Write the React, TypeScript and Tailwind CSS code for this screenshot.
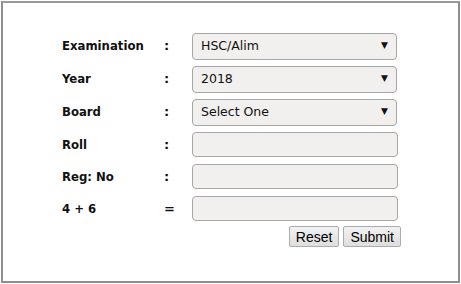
import React from 'react';

const rows = [
  { label: 'Examination', sep: ':', kind: 'select', value: 'HSC/Alim' },
  { label: 'Year', sep: ':', kind: 'select', value: '2018' },
  { label: 'Board', sep: ':', kind: 'select', value: 'Select One' },
  { label: 'Roll', sep: ':', kind: 'input' },
  { label: 'Reg: No', sep: ':', kind: 'input' },
  { label: '4 + 6', sep: '=', kind: 'input' },
];

export default function App() {
  return (
    <div className="w-[461px] h-[284px] bg-white p-px font-['DejaVu_Sans',Verdana,sans-serif]">
      <div className="w-[459px] h-[282px] border-2 border-[#8e8e8e] border-t-[#9a9a9a] pl-[59px] pt-[30px]">
        <div className="flex flex-col gap-[7px]">
          {rows.map((r) => (
            <div key={r.label} className={`flex items-center ${r.kind === 'select' ? 'h-[26px]' : 'h-[25px]'}`}>
              <span className="w-[101px] text-[13px] font-bold text-[#111] font-['DejaVu_Sans_Condensed','DejaVu_Sans',sans-serif]">{r.label}</span>
              <span className={`w-[29px] text-[13px] font-bold text-[#111] ${r.sep === '=' ? 'pl-[1px]' : 'pl-[1px]'}`}>{r.sep}</span>
              {r.kind === 'select' ? (
                <div className="w-[205px] h-[27px] rounded-[4px] border border-[#a6a6a6] bg-[#f2efef] flex items-center justify-between pl-[8px] pr-[8px]">
                  <span className="text-[12.5px] text-[#111]">{r.value}</span>
                  <span className="text-[9px] text-[#111]">▼</span>
                </div>
              ) : (
                <div className="w-[206px] h-[25px] rounded-[4px] border border-[#a6a6a6] bg-[#f2efef]" />
              )}
            </div>
          ))}
        </div>
        <div className="flex justify-end gap-[4px] w-[339px] mt-[5px] font-['Liberation_Sans',Arial,sans-serif]">
          <button className="h-[21px] px-[6px] text-[14px] text-black border border-[#acacac] rounded-[2px] bg-gradient-to-b from-[#f2f2f2] to-[#dedede] leading-none">Reset</button>
          <button className="h-[21px] px-[6px] text-[14px] text-black border border-[#acacac] rounded-[2px] bg-gradient-to-b from-[#f2f2f2] to-[#dedede] leading-none">Submit</button>
        </div>
      </div>
    </div>
  );
}
